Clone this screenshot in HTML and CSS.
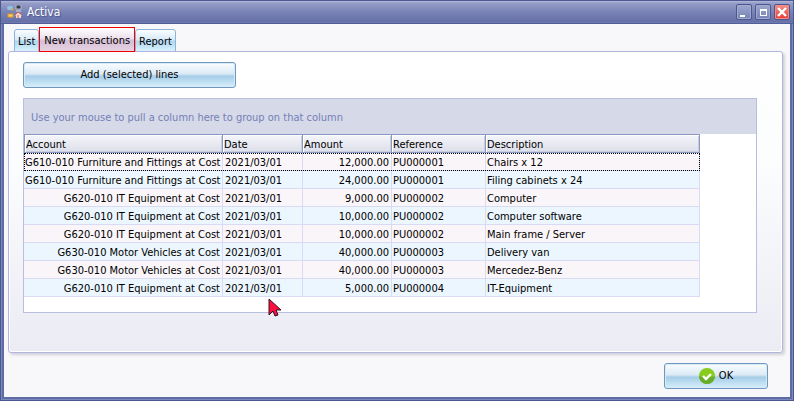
FILE: index.html
```html
<!DOCTYPE html>
<html lang="en">
<head>
<meta charset="utf-8">
<title>Activa</title>
<link rel="stylesheet" href="styles.css">
</head>
<body>
<div class="window">
  <header class="titlebar">
    <svg class="app-icon" width="16" height="14" viewBox="0 0 16 14" aria-hidden="true">
      <rect x="1" y="1" width="6" height="4" rx="2" fill="#8fc4e4"/>
      <path d="M5 3l3 1-2 2z" fill="#e8a33a"/>
      <rect x="10" y="0" width="5" height="4" fill="#333a48" stroke="#b4b9c4"/>
      <path d="M10 6h5" stroke="#d8dbe2"/>
      <rect x="2" y="9" width="5" height="3" fill="#f5cf6a" stroke="#e39a1e"/>
      <path d="M9 10l3-3 4 3-1 1v2h-5v-2z" fill="#f2d9d6"/>
      <path d="M9 10l3-3 4 3M12 10v3" fill="none" stroke="#cf5648"/>
    </svg>
    <h1 class="title">Activa</h1>
    <div class="controls">
      <button class="control" type="button" aria-label="Minimize"><svg width="14" height="14" viewBox="0 0 14 14"><path d="M3 10h5v2H3z" fill="#fff"/></svg></button>
      <button class="control" type="button" aria-label="Maximize"><svg width="14" height="14" viewBox="0 0 14 14"><path d="M4 4h7v7H4zM5 6v4h5V6z" fill="#fff" fill-rule="evenodd"/></svg></button>
      <button class="control close" type="button" aria-label="Close"><svg width="14" height="14" viewBox="0 0 14 14"><path d="M3 3l8 8M11 3l-8 8" stroke="#fff" stroke-width="2.4"/></svg></button>
    </div>
  </header>
  <main class="client">
    <div class="tabs" role="tablist">
      <button class="tab" type="button" role="tab">List</button>
      <button class="tab active" type="button" role="tab" aria-selected="true">New transactions</button>
      <button class="tab" type="button" role="tab">Report</button>
    </div>
    <section class="panel">
      <button class="button add" type="button">Add (selected) lines</button>
      <div class="grid">
        <div class="group-bar">Use your mouse to pull a column here to group on that column</div>
        <table class="table">
          <colgroup><col class="c-account"><col class="c-date"><col class="c-amount"><col class="c-ref"><col class="c-desc"></colgroup>
          <thead>
            <tr><th>Account</th><th>Date</th><th>Amount</th><th>Reference</th><th>Description</th></tr>
          </thead>
          <tbody>
            <tr class="focused"><td class="num">G610-010 Furniture and Fittings at Cost</td><td>2021/03/01</td><td class="num">12,000.00</td><td>PU000001</td><td>Chairs x 12</td></tr>
            <tr><td class="num">G610-010 Furniture and Fittings at Cost</td><td>2021/03/01</td><td class="num">24,000.00</td><td>PU000001</td><td>Filing cabinets x 24</td></tr>
            <tr><td class="num">G620-010 IT Equipment at Cost</td><td>2021/03/01</td><td class="num">9,000.00</td><td>PU000002</td><td>Computer</td></tr>
            <tr><td class="num">G620-010 IT Equipment at Cost</td><td>2021/03/01</td><td class="num">10,000.00</td><td>PU000002</td><td>Computer software</td></tr>
            <tr><td class="num">G620-010 IT Equipment at Cost</td><td>2021/03/01</td><td class="num">10,000.00</td><td>PU000002</td><td>Main frame / Server</td></tr>
            <tr><td class="num">G630-010 Motor Vehicles at Cost</td><td>2021/03/01</td><td class="num">40,000.00</td><td>PU000003</td><td>Delivery van</td></tr>
            <tr><td class="num">G630-010 Motor Vehicles at Cost</td><td>2021/03/01</td><td class="num">40,000.00</td><td>PU000003</td><td>Mercedez-Benz</td></tr>
            <tr><td class="num">G620-010 IT Equipment at Cost</td><td>2021/03/01</td><td class="num">5,000.00</td><td>PU000004</td><td>IT-Equipment</td></tr>
          </tbody>
        </table>
      </div>
    </section>
    <footer class="actions">
      <button class="button ok" type="button">
        <svg width="16" height="16" viewBox="0 0 16 16" aria-hidden="true">
          <circle cx="8" cy="8" r="8" fill="#88cc1c"/>
          <path d="M0 8a8 8 0 0 0 16 0q-8 3-16 0z" fill="#68ac2c"/>
          <path d="M4 8l3 3 5-5" fill="none" stroke="#fff" stroke-width="2.4"/>
        </svg>
        OK
      </button>
    </footer>
  </main>
  <svg class="cursor" width="14" height="20" viewBox="0 0 14 20" aria-hidden="true">
    <path d="M1 1v16l4-4 2 5 3-1-2-5h5z" fill="#ff1040" stroke="#30141c"/>
  </svg>
</div>
</body>
</html>
```
FILE: styles.css
```css
* { box-sizing: border-box; }

body {
  margin: 0;
  font-family: "DejaVu Sans Condensed", "DejaVu Sans", sans-serif;
  font-size: 11px;
  line-height: 14px;
  color: #000;
}

button {
  font: inherit;
  color: inherit;
  padding: 0;
}

.window {
  position: relative;
  display: flex;
  flex-direction: column;
  min-height: 100vh;
  padding: 0 4px 4px;
  background: #5f6ba5;
  box-shadow: inset 0 0 0 1px #4b578f, inset 0 0 0 2px #7d89bd;
}

.titlebar {
  display: flex;
  align-items: center;
  height: 24px;
  margin: 0 -3px;
  padding: 0 3px 0 5px;
  border-top: 1px solid #4f5996;
  border-bottom: 1px solid #525e98;
  background: linear-gradient(#b4bad9 0, #959dc8 2px, #7680b3 12px, #6570a8 21px, #7681b5 22px);
}

.title {
  flex: 1;
  margin: 0 0 0 5px;
  font-size: 12px;
  font-weight: normal;
  color: #fff;
  text-shadow: 1px 1px 1px #4a5590;
}

.controls { display: flex; gap: 3px; }

.control {
  width: 16px;
  height: 16px;
  border: 1px solid #4c578f;
  border-radius: 2px;
  background: linear-gradient(#a0a8ce, #7681b5);
  box-shadow: inset 0 0 0 1px #a0a9d0;
}

.control svg { display: block; }

.close {
  background: linear-gradient(#f0938d, #e83b35);
  box-shadow: inset 0 0 0 1px #f58b84;
}

.client {
  flex: 1;
  display: flex;
  flex-direction: column;
  padding: 3px 7px 8px 4px;
  background: #f8f8fb;
}

.tabs {
  display: flex;
  align-items: flex-end;
  padding-left: 6px;
}

.tab {
  height: 23px;
  padding: 2px 3px 0;
  border: 1px solid #8eb3d6;
  border-radius: 3px 3px 0 0;
  background: linear-gradient(#fafdff, #d8ebf8 45%, #afd8f0 55%, #d9f2fc);
}

.active {
  position: relative;
  z-index: 1;
  height: 25px;
  padding: 2px 4px 0;
  border-color: #f00000;
  border-radius: 0;
  background: linear-gradient(#fff, #ede0ec 45%, #d6bdd5 55%, #e6d3e3);
}

.panel {
  flex: 1;
  display: flex;
  flex-direction: column;
  margin-top: -1px;
  padding: 10px 25px 39px 14px;
  border: 1px solid #b3b6dc;
  border-radius: 3px;
  background: linear-gradient(#fff, #fbfcfd 40%, #ebebf4);
  box-shadow: inset 0 0 0 1px #fff, 2px 2px 3px #d0d0d8;
}

.button {
  display: flex;
  align-items: center;
  justify-content: center;
  height: 26px;
  border: 1px solid #6f98c0;
  border-radius: 3px;
  background: linear-gradient(#fafdff, #dceaf5 45%, #a6cde8 55%, #d6effb);
  box-shadow: inset 0 0 0 1px #d8eaf6;
}

.add { width: 213px; }

.grid {
  flex: 1;
  margin-top: 10px;
  border: 1px solid #b9bedc;
  background: #fff;
}

.group-bar {
  padding: 12px 7px 9px;
  background: #d6d9e7;
  color: #7480b8;
}

.table {
  width: 676px;
  table-layout: fixed;
  border-collapse: separate;
  border-spacing: 0;
}

.c-account { width: 199px; }
.c-date { width: 80px; }
.c-amount { width: 89px; }
.c-ref { width: 94px; }

th, td {
  height: 18px;
  padding: 2px 2px 0 1px;
  overflow: hidden;
  white-space: nowrap;
  line-height: 14px;
  text-align: left;
}

th {
  height: 19px;
  border: solid #8c98c4;
  border-width: 1px 1px 1px 0;
  font-weight: normal;
  background: linear-gradient(#f5f6fa, #dcdee9);
  box-shadow: inset 1px 1px #fff, inset -1px -1px #c9cde0;
}

th:first-child { border-left-width: 1px; }

td {
  border: solid #d9daf3;
  border-width: 0 1px 1px 0;
  background: #ebf6fe;
}

td:nth-child(2) { padding-left: 2px; }

tr:nth-child(odd) td { background: #faf5f9; }
.num { text-align: right; }

.focused {
  outline: 1px dotted #000;
  outline-offset: -1px;
}

.actions {
  display: flex;
  justify-content: flex-end;
  padding: 10px 15px 0;
}

.ok { width: 104px; gap: 4px; }

.cursor {
  position: absolute;
  left: 268px;
  top: 298px;
}
```
